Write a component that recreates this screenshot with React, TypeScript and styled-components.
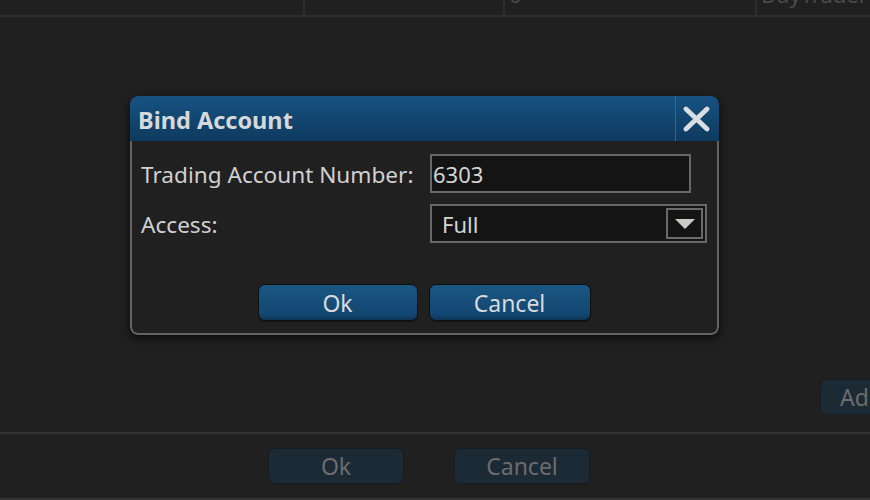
import React from "react";
import styled, { createGlobalStyle } from "styled-components";

const GlobalStyle = createGlobalStyle`
  html, body { margin: 0; padding: 0; background: #202020; }
  * { box-sizing: border-box; }
`;

const FONT = `"Noto Sans", "Open Sans", "Liberation Sans", sans-serif`;

const Screen = styled.div`
  position: relative;
  width: 870px;
  height: 500px;
  overflow: hidden;
  background: #202020;
  display: flex;
  flex-direction: column;
  font-family: ${FONT};
`;

const TopRow = styled.div`
  height: 17px;
  display: grid;
  grid-template-columns: 305px 200px 252px 1fr;
  border-bottom: 2px solid #2d2d2d;
  overflow: hidden;
`;

const Cell = styled.div`
  border-right: 2px solid #2d2d2d;
  padding-left: 4px;
  overflow: hidden;
  &:last-child { border-right: none; }
`;

const CellText = styled.div`
  margin-top: -21px;
  font-size: 22px;
  line-height: 30px;
  color: #4a4a4a;
  white-space: nowrap;
`;

const Main = styled.div`
  flex: 1;
  display: flex;
  justify-content: flex-end;
  align-items: flex-end;
  padding-bottom: 17px;
`;

const DimButton = styled.div<{ $w: number }>`
  width: ${(p) => p.$w}px;
  height: 36px;
  border-radius: 6px;
  background: #1c2a35;
  border: 1px solid #171c20;
  color: #6c6c6c;
  font-size: 23px;
  display: flex;
  align-items: center;
  justify-content: center;
  flex-shrink: 0;
`;

const AddButton = styled(DimButton)`
  margin-right: -50px;
  justify-content: flex-start;
  padding-left: 19px;
`;

const Footer = styled.div`
  height: 68px;
  border-top: 2px solid #333;
  border-bottom: 2px solid #333;
  display: flex;
  gap: 50px;
  padding: 14px 0 0 268px;
`;

const Modal = styled.div`
  position: absolute;
  left: 130px;
  top: 96px;
  width: 589px;
  height: 239px;
  border-radius: 8px;
  background: #202020;
  box-shadow: 0 3px 10px rgba(0, 0, 0, 0.75);
  display: flex;
  flex-direction: column;
  overflow: hidden;
`;

const TitleBar = styled.div`
  height: 45px;
  flex-shrink: 0;
  display: flex;
  align-items: stretch;
  background: linear-gradient(#175282, #0e3a5f);
  border-radius: 8px 8px 0 0;
`;

const Title = styled.div`
  flex: 1;
  display: flex;
  align-items: center;
  padding-left: 8px;
  padding-top: 3px;
  font-size: 23.5px;
  font-weight: 700;
  color: #d6d9dc;
`;

const CloseBox = styled.div`
  width: 44px;
  border-left: 1px solid #2b6898;
  display: flex;
  align-items: center;
  justify-content: center;
  padding-left: 2px;
  padding-right: 4px;
`;

const Body = styled.div`
  flex: 1;
  border: 2px solid #646464;
  border-top: none;
  border-radius: 0 0 8px 8px;
  padding: 13px 10px 12px 9px;
  display: flex;
  flex-direction: column;
`;

const FormGrid = styled.div`
  display: grid;
  grid-template-columns: 289px auto;
  row-gap: 11px;
  align-items: center;
`;

const Label = styled.div`
  font-size: 22.6px;
  color: #d0d0d0;
  white-space: nowrap;
  padding-top: 2px;
`;

const Field = styled.div<{ $w: number }>`
  width: ${(p) => p.$w}px;
  height: 39px;
  background: #141414;
  border: 2px solid #676767;
  display: flex;
  align-items: center;
  font-size: 22px;
  color: #d4d4d4;
`;

const FieldText = styled.span<{ $pad: number }>`
  flex: 1;
  padding-left: ${(p) => p.$pad}px;
`;

const DropButton = styled.div`
  width: 37px;
  height: 31px;
  margin-right: 2px;
  border: 2px solid #6a6a6a;
  display: flex;
  align-items: center;
  justify-content: center;
`;

const ButtonRow = styled.div`
  margin-top: auto;
  display: flex;
  justify-content: center;
  gap: 11px;
`;

const Button = styled.div<{ $w: number }>`
  width: ${(p) => p.$w}px;
  height: 37px;
  border-radius: 7px;
  border: 1px solid #0e0e0e;
  background: linear-gradient(#1b5783 0%, #124670 85%, #0d3656 100%);
  color: #d8dadc;
  font-size: 23px;
  display: flex;
  align-items: center;
  justify-content: center;
  box-shadow: 0 1px 0 #151515;
`;

export default function App() {
  return (
    <>
      <GlobalStyle />
      <Screen>
        <TopRow>
          <Cell />
          <Cell />
          <Cell>
            <CellText>0</CellText>
          </Cell>
          <Cell>
            <CellText>DayTrader</CellText>
          </Cell>
        </TopRow>
        <Main>
          <AddButton $w={100}>Add</AddButton>
        </Main>
        <Footer>
          <DimButton $w={136}>Ok</DimButton>
          <DimButton $w={136}>Cancel</DimButton>
        </Footer>

        <Modal>
          <TitleBar>
            <Title>Bind Account</Title>
            <CloseBox>
              <svg width="27" height="26" viewBox="0 0 27 26">
                <path
                  d="M3 3 L24 23 M24 3 L3 23"
                  stroke="#d9dee2"
                  strokeWidth="4.8"
                  strokeLinecap="round"
                  fill="none"
                />
              </svg>
            </CloseBox>
          </TitleBar>
          <Body>
            <FormGrid>
              <Label>Trading Account Number:</Label>
              <Field $w={261}>
                <FieldText $pad={1}>6303</FieldText>
              </Field>
              <Label>Access:</Label>
              <Field $w={277}>
                <FieldText $pad={10}>Full</FieldText>
                <DropButton>
                  <svg width="20" height="10" viewBox="0 0 20 10">
                    <path d="M0 0 H20 L10 10 Z" fill="#c9cdc9" />
                  </svg>
                </DropButton>
              </Field>
            </FormGrid>
            <ButtonRow>
              <Button $w={160}>Ok</Button>
              <Button $w={162}>Cancel</Button>
            </ButtonRow>
          </Body>
        </Modal>
      </Screen>
    </>
  );
}
